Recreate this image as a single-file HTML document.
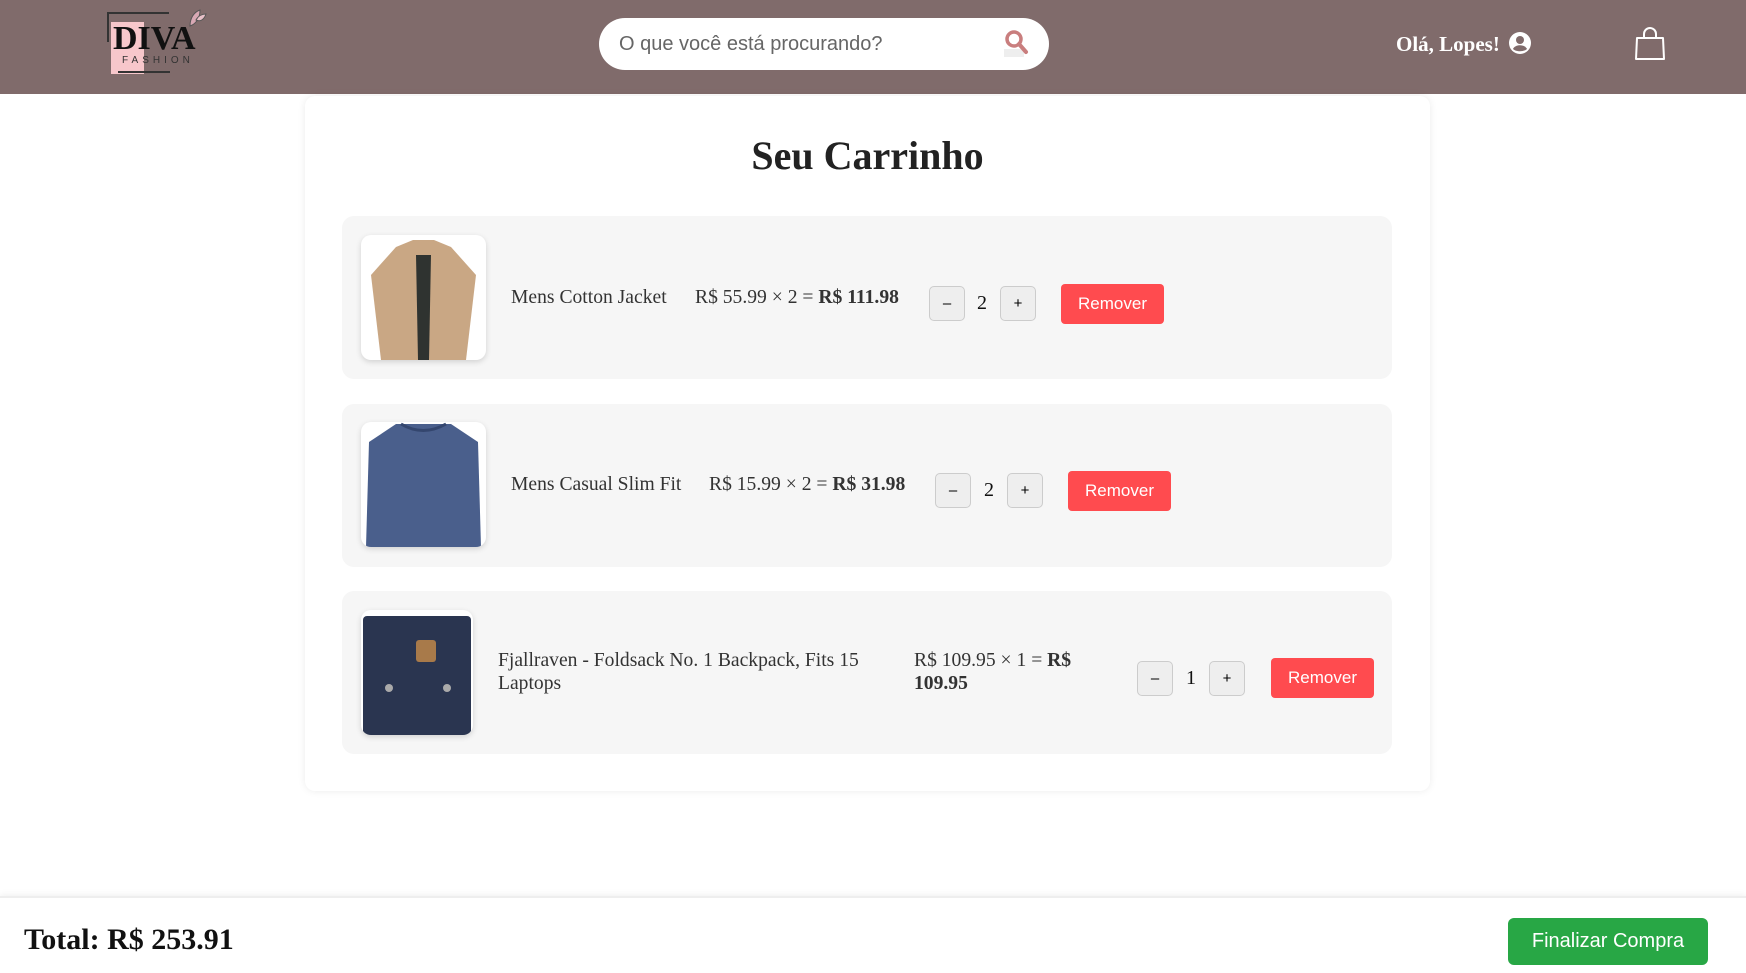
<!DOCTYPE html>
<html><head><meta charset="utf-8"><style>
*{margin:0;padding:0;box-sizing:border-box}
body{width:1746px;height:973px;background:#fff;position:relative;overflow:hidden;font-family:"Liberation Serif",serif;color:#333}
.a{position:absolute}
header{position:absolute;left:0;top:0;width:1746px;height:94px;background:#806b6b}
.search{left:599px;top:18px;width:450px;height:52px;background:#fff;border-radius:26px;font-family:"Liberation Sans",sans-serif;font-size:20px;color:#666;padding:15px 0 0 20px}
.card{left:305px;top:96px;width:1125px;height:695px;background:#fff;border-radius:10px;box-shadow:0 0 8px rgba(0,0,0,.08)}
.item{left:342px;width:1050px;height:163px;background:#f6f6f6;border-radius:12px}
.img{width:125px;height:125px;border-radius:10px;background:#fff;box-shadow:0 2px 6px rgba(0,0,0,.15);overflow:hidden}
.t{font-size:19.6px;line-height:23px;color:#333;white-space:nowrap}
.q{width:36px;height:35px;background:#eee;border:1px solid #ccc;border-radius:5px;font-family:"Liberation Sans",sans-serif;font-size:15px;text-align:center;line-height:33px;color:#000}
.n{font-size:20px;width:20px;text-align:center;color:#111}
.rm{width:103px;height:40px;background:#ff4b4f;color:#fff;border-radius:4px;font-family:"Liberation Sans",sans-serif;font-size:17px;text-align:center;line-height:40px}
</style></head><body>
<header>
<div class="a" style="left:107px;top:12px;width:62px;height:2px;background:#333"></div>
<div class="a" style="left:107px;top:12px;width:2px;height:30px;background:#333"></div>
<div class="a" style="left:111px;top:22px;width:33px;height:52px;background:#f7c7cb"></div>
<div class="a" style="left:113px;top:20px;font-size:34px;font-weight:bold;color:#111">DIVA</div>
<div class="a" style="left:122px;top:55px;font-family:'Liberation Sans',sans-serif;font-size:10px;letter-spacing:4px;color:#333">FASHION</div>
<div class="a" style="left:118px;top:71px;width:52px;height:2px;background:#333"></div>
<svg class="a" style="left:186px;top:6px" width="22" height="22" viewBox="0 0 22 22"><path d="M4 20 C4 12 8 6 14 4 C14 12 10 18 4 20Z" fill="#d8a8b4" stroke="#555" stroke-width="1"/><path d="M10 14 C12 10 16 8 20 8 C18 14 14 16 10 14Z" fill="#e8c0c8" stroke="#555" stroke-width="1"/></svg>
<div class="a search">O que você está procurando?</div>
<svg class="a" style="left:1004px;top:29px" width="26" height="28" viewBox="0 0 26 28"><rect x="0" y="20" width="20" height="8" fill="#eee"/><circle cx="10" cy="10" r="7" fill="none" stroke="#c97e7e" stroke-width="3.5"/><path d="M15 15 L22 23" stroke="#c97e7e" stroke-width="4" stroke-linecap="round"/></svg>
<div class="a" style="left:1396px;top:32px;font-size:21px;font-weight:bold;color:#fff">Olá, Lopes!</div>
<svg class="a" style="left:1509px;top:32px" width="22" height="22" viewBox="0 0 22 22"><circle cx="11" cy="11" r="11" fill="#fff"/><circle cx="11" cy="8" r="4" fill="#806b6b"/><path d="M4 17 C6 12 16 12 18 17 C15 20 7 20 4 17Z" fill="#806b6b"/></svg>
<svg class="a" style="left:1634px;top:27px" width="32" height="34" viewBox="0 0 32 34"><path d="M10 12 V7 A6 6 0 0 1 22 7 V12" fill="none" stroke="#fff" stroke-width="2"/><path d="M3 11 H29 L30 32 H2 Z" fill="none" stroke="#fff" stroke-width="2" stroke-linejoin="round"/></svg>
</header>

<div class="a card"></div>
<div class="a" style="left:305px;top:132px;width:1125px;text-align:center;font-size:40px;font-weight:bold;color:#222">Seu Carrinho</div>

<div class="a item" style="top:216px"></div>
<div class="a img" style="left:361px;top:235px"><svg width="125" height="125"><path d="M20 125 L10 40 L35 12 L52 5 L73 5 L90 12 L115 40 L105 125Z" fill="#c9a784"/><path d="M55 20 L70 20 L68 125 L57 125Z" fill="#2f3330"/></svg></div>
<div class="a t" style="left:511px;top:286px">Mens Cotton Jacket</div>
<div class="a t" style="left:695px;top:286px">R$ 55.99 × 2 = <b>R$ 111.98</b></div>
<div class="a q" style="left:929px;top:286px">–</div>
<div class="a n t" style="left:972px;top:292px;font-size:20px">2</div>
<div class="a q" style="left:1000px;top:286px">+</div>
<div class="a rm" style="left:1061px;top:284px">Remover</div>

<div class="a item" style="top:404px"></div>
<div class="a img" style="left:361px;top:422px"><svg width="125" height="125"><path d="M5 125 L8 20 L35 2 L90 2 L117 20 L120 125Z" fill="#4a5f8c"/><path d="M40 2 Q62 15 85 2" fill="none" stroke="#34466e" stroke-width="3"/></svg></div>
<div class="a t" style="left:511px;top:473px">Mens Casual Slim Fit</div>
<div class="a t" style="left:709px;top:473px">R$ 15.99 × 2 = <b>R$ 31.98</b></div>
<div class="a q" style="left:935px;top:473px">–</div>
<div class="a n t" style="left:979px;top:479px;font-size:20px">2</div>
<div class="a q" style="left:1007px;top:473px">+</div>
<div class="a rm" style="left:1068px;top:471px">Remover</div>

<div class="a item" style="top:591px"></div>
<div class="a img" style="left:361px;top:610px;width:112px"><svg width="112" height="125"><rect x="2" y="6" width="108" height="119" rx="4" fill="#2a3550"/><rect x="55" y="30" width="20" height="22" rx="3" fill="#a87a4a"/><circle cx="28" cy="78" r="4" fill="#aaa"/><circle cx="86" cy="78" r="4" fill="#aaa"/></svg></div>
<div class="a t" style="left:498px;top:649px;line-height:23px">Fjallraven - Foldsack No. 1 Backpack, Fits 15<br>Laptops</div>
<div class="a t" style="left:914px;top:649px;line-height:23px">R$ 109.95 × 1 = <b>R$</b><br><b>109.95</b></div>
<div class="a q" style="left:1137px;top:661px">–</div>
<div class="a n t" style="left:1181px;top:667px;font-size:20px">1</div>
<div class="a q" style="left:1209px;top:661px">+</div>
<div class="a rm" style="left:1271px;top:658px">Remover</div>

<div class="a" style="left:0;top:896px;width:1746px;height:77px;background:#fff;border-top:2px solid #eee;box-shadow:0 -2px 6px rgba(0,0,0,.05)"></div>
<div class="a" style="left:24px;top:923px;font-size:30px;font-weight:bold;color:#111">Total: R$ 253.91</div>
<div class="a" style="left:1508px;top:918px;width:200px;height:47px;background:#28a745;border-radius:6px;color:#fff;font-family:'Liberation Sans',sans-serif;font-size:20px;text-align:center;line-height:47px">Finalizar Compra</div>
</body></html>
